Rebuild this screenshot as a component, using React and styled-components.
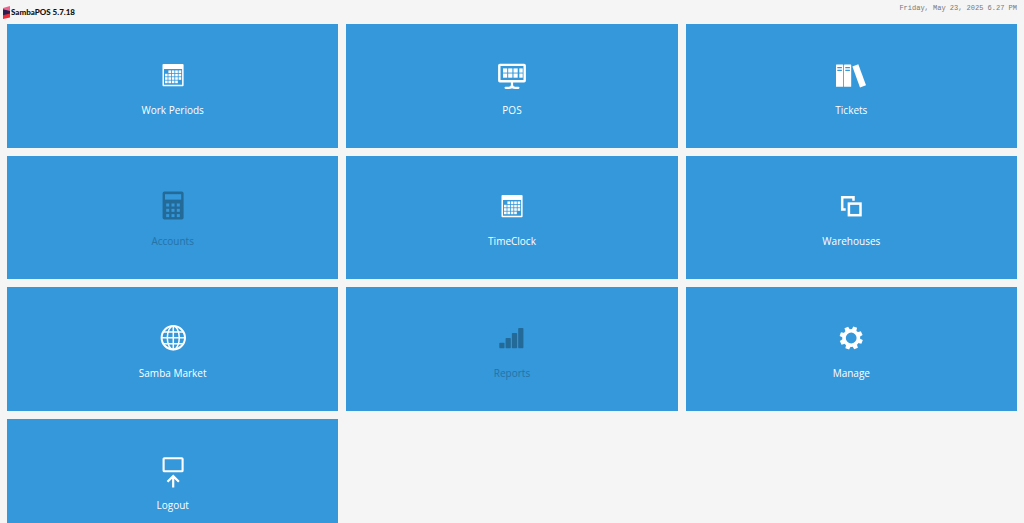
import React from "react";
import styled, { createGlobalStyle } from "styled-components";

const GlobalStyle = createGlobalStyle`
  html {
    scrollbar-width: none;
  }

  body {
    margin: 0;
    background: #f5f5f5;
    font-family: "Open Sans", "Noto Sans", sans-serif;
  }
`;

const Header = styled.header`
  display: flex;
  justify-content: space-between;
  align-items: flex-start;
  height: 24px;
  padding: 0 7px 0 3px;
  box-sizing: border-box;
`;

const Brand = styled.h1`
  display: flex;
  align-items: center;
  gap: 1px;
  height: 24px;
  margin: 0;
  color: #111;
  font-family: Lato, "Open Sans", sans-serif;
  font-size: 8px;
  font-weight: 900;
`;

const Clock = styled.time`
  padding-top: 3px;
  color: #777;
  font-family: "Liberation Mono", monospace;
  font-size: 7px;
  line-height: 10px;
`;

const Menu = styled.main`
  display: grid;
  grid-template-columns: repeat(3, 1fr);
  gap: 8px;
  padding: 0 7px 8px;
`;

const Tile = styled.button`
  display: flex;
  flex-direction: column;
  align-items: center;
  justify-content: center;
  gap: 10px;
  aspect-ratio: 2.68;
  padding: 6px 0 0;
  border: 0;
  background: #3498db;
  color: #fff;
  font-family: inherit;
  cursor: pointer;

  &:disabled {
    color: #246a99;
    cursor: default;
  }
`;

const TileIcon = styled.svg`
  width: 32px;
  height: 32px;
  overflow: visible;
`;

const TileLabel = styled.span`
  font-size: 10px;
  line-height: 18px;
  opacity: ${(props) => (props.$dimmed ? 0.8 : 1)};
`;

const BACK = "#3498db";

function Logo() {
  return (
    <svg width="7" height="13" viewBox="0 0 7 13" aria-hidden="true">
      <path d="M0 2 7 0v6L0 8z" fill="#f0628c" />
      <path d="M0 7.5 7 5.5v6L0 13z" fill="#ef2b36" />
      <path d="M0 3.2 7 5v2.4L0 9.2z" fill="#2a2050" />
    </svg>
  );
}

function CalendarIcon() {
  const cells = [];
  for (let row = 0; row < 4; row++) {
    for (let col = 0; col < 5; col++) {
      if ((row === 0 && col === 0) || (row === 3 && col === 4)) continue;
      cells.push(
        <rect
          key={`${row}-${col}`}
          x={8 + col * 3.4}
          y={11.4 + row * 3.4}
          width="2.6"
          height="2.6"
        />
      );
    }
  }
  return (
    <g fill="currentColor">
      <path
        fillRule="evenodd"
        d="M6.4 5.1h19.3q.9 0 .9.9v20.3q0 .9-.9.9H6.4q-.9 0-.9-.9V6q0-.9.9-.9zM7 10.1v15.6h18.1V10.1z"
      />
      {cells}
    </g>
  );
}

function PosIcon() {
  return (
    <g fill="currentColor">
      <rect
        x="3.3"
        y="5.9"
        width="25.4"
        height="16.4"
        rx="0.6"
        fill="none"
        stroke="currentColor"
        strokeWidth="2.4"
      />
      {[9.4, 14.5].map((y) => (
        <g key={y}>
          <rect x="7" y={y} width="4.2" height="4.2" />
          <rect x="12.2" y={y} width="4.2" height="4.2" />
          <rect x="17.5" y={y} width="4.2" height="4.2" />
          <rect x="23.3" y={y} width="3.4" height="4.2" />
        </g>
      ))}
      <path
        d="M16 23v3M9.6 28.8h3.2q3.2 0 3.2-2.9q0 2.9 3.2 2.9h3.2"
        fill="none"
        stroke="currentColor"
        strokeWidth="2.2"
        strokeLinecap="round"
      />
    </g>
  );
}

function BooksIcon() {
  return (
    <g fill="currentColor">
      <rect x="1" y="5.6" width="7.2" height="22.2" rx="0.4" />
      <rect x="9" y="5.6" width="7.2" height="22.2" rx="0.4" />
      <path d="M17.4 7.5 23.3 5.2 31 26.3 25 28.4z" />
      <path
        d="M2.3 8.6h4.6M2.3 11.4h4.6M10.3 8.6h4.6M10.3 11.4h4.6"
        stroke={BACK}
        strokeWidth="1.1"
      />
    </g>
  );
}

function CalculatorIcon() {
  return (
    <g>
      <rect x="5.6" y="1.6" width="21" height="28" rx="1.8" fill="currentColor" />
      <rect x="8" y="4.2" width="16.2" height="5.4" fill={BACK} />
      {[13.5, 18.8, 24.1].map((y) =>
        [9.2, 14.5, 19.8].map((x) => (
          <rect key={`${x}-${y}`} x={x} y={y} width="3" height="3" fill={BACK} />
        ))
      )}
    </g>
  );
}

function WindowsIcon() {
  return (
    <g fill="none" stroke="currentColor" strokeWidth="2.5">
      <rect x="13.9" y="13.6" width="11.6" height="11.6" />
      <path d="M10.7 19.5H7.2V7.3h11.3v3.4" />
    </g>
  );
}

function GlobeIcon() {
  return (
    <g fill="none" stroke="currentColor" strokeWidth="1.5">
      <circle cx="16.3" cy="15.8" r="11.7" strokeWidth="2" />
      <ellipse cx="16.3" cy="15.8" rx="6" ry="11.7" />
      <path d="M16.3 4.1v23.4M4.6 15.8H28M6.4 9.9h19.8M6.4 21.7h19.8" />
    </g>
  );
}

function BarsIcon() {
  return (
    <g fill="currentColor">
      <rect x="3.3" y="20.8" width="5.2" height="5.4" rx="0.7" />
      <rect x="9.6" y="16" width="5.2" height="10.2" rx="0.7" />
      <rect x="15.9" y="11" width="5.2" height="15.2" rx="0.7" />
      <rect x="22.2" y="6" width="5.2" height="20.2" rx="0.7" />
    </g>
  );
}

function GearIcon() {
  return (
    <g transform="translate(16.2 16)">
      <circle r="7.2" fill="none" stroke="currentColor" strokeWidth="3.6" />
      {[0, 45, 90, 135, 180, 225, 270, 315].map((angle) => (
        <path
          key={angle}
          d="M-2.5-8-2-11.6h4L2.5-8z"
          fill="currentColor"
          transform={`rotate(${angle + 20})`}
        />
      ))}
    </g>
  );
}

function LogoutIcon() {
  return (
    <g fill="none" stroke="currentColor" strokeWidth="2.2">
      <rect x="6.6" y="4.2" width="19" height="13" rx="0.8" strokeWidth="2.1" />
      <path d="M16.2 33.4V22.2M10.5 27.8l5.7-5.7 5.7 5.7" />
    </g>
  );
}

const items = [
  { label: "Work Periods", icon: CalendarIcon },
  { label: "POS", icon: PosIcon },
  { label: "Tickets", icon: BooksIcon },
  { label: "Accounts", icon: CalculatorIcon, disabled: true },
  { label: "TimeClock", icon: CalendarIcon },
  { label: "Warehouses", icon: WindowsIcon },
  { label: "Samba Market", icon: GlobeIcon },
  { label: "Reports", icon: BarsIcon, disabled: true },
  { label: "Manage", icon: GearIcon },
  { label: "Logout", icon: LogoutIcon },
];

function App() {
  return (
    <>
      <GlobalStyle />
      <Header>
        <Brand>
          <Logo />
          SambaPOS 5.7.18
        </Brand>
        <Clock dateTime="2025-05-23T18:27">Friday, May 23, 2025 6.27 PM</Clock>
      </Header>
      <Menu>
        {items.map(({ label, icon: Icon, disabled }) => (
          <Tile key={label} type="button" disabled={disabled}>
            <TileIcon viewBox="0 0 32 32" aria-hidden="true">
              <Icon />
            </TileIcon>
            <TileLabel $dimmed={disabled}>{label}</TileLabel>
          </Tile>
        ))}
      </Menu>
    </>
  );
}

export default App;
